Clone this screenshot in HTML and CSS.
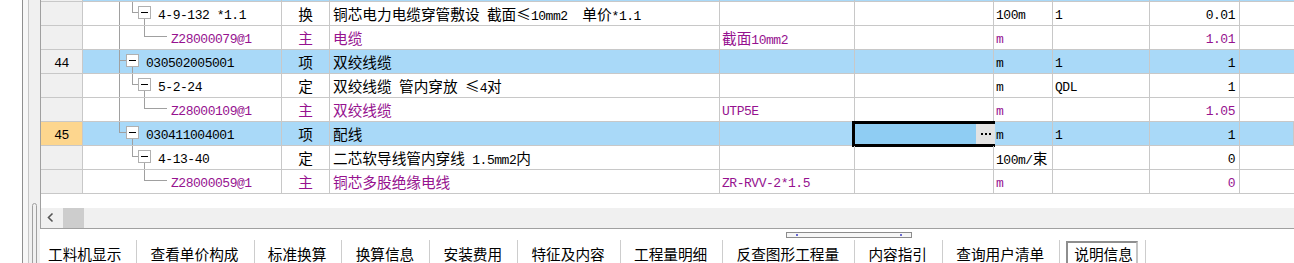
FILE: index.html
```html
<!DOCTYPE html>
<html lang="zh-CN">
<head>
<meta charset="utf-8">
<title>清单</title>
<link rel="stylesheet" href="styles.css">
</head>
<body>
<div class="app">
  <div class="side">
    <div class="side-a"></div>
    <div class="side-b"></div>
    <div class="side-c"><div class="grip"></div></div>
  </div>
  <div class="main">
    <div class="grid">
      <div class="body">
        <div class="rows">
          <div class="row sel">
            <div class="rn a"></div><div class="tree"></div><div class="ty"></div><div class="nm"></div><div class="sp"></div><div class="c6"></div><div class="un"></div><div class="qt"></div><div class="am"></div><div></div>
          </div>
          <div class="row">
            <div class="rn a"></div>
            <div class="tree"><svg class="tw" width="75" height="23" viewBox="0 0 75 23"><path class="ln" d="M36.5 0V23M49.5 0V10.5H55M61.5 16.5V23"/><rect class="bx" x="55.5" y="4.5" width="12" height="12"/><path class="mn" d="M58 10.5H65"/></svg><span class="a">4-9-132 *1.1</span></div>
            <div class="ty">换</div>
            <div class="nm">铜芯电力电缆穿管敷设<span class="a"> </span>截面<span class="fw">≤</span><span class="a">10mm2  </span>单价<span class="a">*1.1</span></div>
            <div class="sp"></div><div class="c6"></div>
            <div class="un a">100m</div><div class="qt a">1</div><div class="am a">0.01</div><div></div>
          </div>
          <div class="row pu">
            <div class="rn a"></div>
            <div class="tree"><svg class="tw" width="88" height="23" viewBox="0 0 88 23"><path class="ln" d="M36.5 0V23M61.5 0V10.5H84"/></svg><span class="a">Z28000079@1</span></div>
            <div class="ty">主</div>
            <div class="nm">电缆</div>
            <div class="sp">截面<span class="a">10mm2</span></div><div class="c6"></div>
            <div class="un a">m</div><div class="qt a"></div><div class="am a">1.01</div><div></div>
          </div>
          <div class="row sel">
            <div class="rn a">44</div>
            <div class="tree"><svg class="tw" width="63" height="23" viewBox="0 0 63 23"><path class="ln" d="M36.5 0V23M36 10.5H43M49.5 16.5V23"/><rect class="bx" x="43.5" y="4.5" width="12" height="12"/><path class="mn" d="M46 10.5H53"/></svg><span class="a">030502005001</span></div>
            <div class="ty">项</div>
            <div class="nm">双绞线缆</div>
            <div class="sp"></div><div class="c6"></div>
            <div class="un a">m</div><div class="qt a">1</div><div class="am a">1</div><div></div>
          </div>
          <div class="row">
            <div class="rn a"></div>
            <div class="tree"><svg class="tw" width="75" height="23" viewBox="0 0 75 23"><path class="ln" d="M36.5 0V23M49.5 0V10.5H55M61.5 16.5V23"/><rect class="bx" x="55.5" y="4.5" width="12" height="12"/><path class="mn" d="M58 10.5H65"/></svg><span class="a">5-2-24</span></div>
            <div class="ty">定</div>
            <div class="nm">双绞线缆<span class="a"> </span>管内穿放<span class="a"> </span><span class="fw">≤</span><span class="a">4</span>对</div>
            <div class="sp"></div><div class="c6"></div>
            <div class="un a">m</div><div class="qt a">QDL</div><div class="am a">1</div><div></div>
          </div>
          <div class="row pu">
            <div class="rn a"></div>
            <div class="tree"><svg class="tw" width="88" height="23" viewBox="0 0 88 23"><path class="ln" d="M36.5 0V23M61.5 0V10.5H84"/></svg><span class="a">Z28000109@1</span></div>
            <div class="ty">主</div>
            <div class="nm">双绞线缆</div>
            <div class="sp a">UTP5E</div><div class="c6"></div>
            <div class="un a">m</div><div class="qt a"></div><div class="am a">1.05</div><div></div>
          </div>
          <div class="row sel">
            <div class="rn cur a">45</div>
            <div class="tree"><svg class="tw" width="63" height="23" viewBox="0 0 63 23"><path class="ln" d="M36.5 0V10.5M36 10.5H43M49.5 16.5V23"/><rect class="bx" x="43.5" y="4.5" width="12" height="12"/><path class="mn" d="M46 10.5H53"/></svg><span class="a">030411004001</span></div>
            <div class="ty">项</div>
            <div class="nm">配线</div>
            <div class="sp"></div><div class="c6"></div>
            <div class="un a">m</div><div class="qt a">1</div><div class="am a">1</div><div></div>
            <div class="edit"><div class="ebtn"><svg width="12" height="4" viewBox="0 0 12 4"><rect x="1" y="1" width="2" height="2"/><rect x="5" y="1" width="2" height="2"/><rect x="9" y="1" width="2" height="2"/></svg></div></div>
          </div>
          <div class="row">
            <div class="rn a"></div>
            <div class="tree"><svg class="tw" width="75" height="23" viewBox="0 0 75 23"><path class="ln" d="M49.5 0V10.5H55M61.5 16.5V23"/><rect class="bx" x="55.5" y="4.5" width="12" height="12"/><path class="mn" d="M58 10.5H65"/></svg><span class="a">4-13-40</span></div>
            <div class="ty">定</div>
            <div class="nm">二芯软导线管内穿线<span class="a"> 1.5mm2</span>内</div>
            <div class="sp"></div><div class="c6"></div>
            <div class="un"><span class="a">100m/</span>束</div><div class="qt a"></div><div class="am a">0</div><div></div>
          </div>
          <div class="row pu">
            <div class="rn a"></div>
            <div class="tree"><svg class="tw" width="88" height="23" viewBox="0 0 88 23"><path class="ln" d="M61.5 0V10.5H84"/></svg><span class="a">Z28000059@1</span></div>
            <div class="ty">主</div>
            <div class="nm">铜芯多股绝缘电线</div>
            <div class="sp a">ZR-RVV-2*1.5</div><div class="c6"></div>
            <div class="un a">m</div><div class="qt a"></div><div class="am a">0</div><div></div>
          </div>
        </div>
      </div>
      <div class="hs">
        <div class="harrow"><svg width="22" height="20" viewBox="0 0 22 20"><path d="M11.5 5.5L7.5 9.5L11.5 13.5" fill="none" stroke="#555" stroke-width="1.6"/></svg></div>
        <div class="hthumb"></div>
      </div>
    </div>
    <div class="tabs">
      <div class="tab">工料机显示</div>
      <div class="tab">查看单价构成</div>
      <div class="tab">标准换算</div>
      <div class="tab">换算信息</div>
      <div class="tab">安装费用</div>
      <div class="tab">特征及内容</div>
      <div class="tab">工程量明细</div>
      <div class="tab">反查图形工程量</div>
      <div class="tab">内容指引</div>
      <div class="tab">查询用户清单</div>
      <div class="tab on"><div class="tbox">说明信息</div></div>
      <div class="handle"><i></i><i></i></div>
    </div>
  </div>
</div>
</body>
</html>
```
FILE: styles.css
```css
* { box-sizing: border-box; margin: 0; padding: 0; }
html, body { width: 1294px; height: 263px; overflow: hidden; background: #fff; }
body {
  font-family: "Noto Sans CJK SC", sans-serif;
  font-size: 14.67px;
  color: #000;
}
.app { display: flex; height: 263px; }

.side { display: flex; flex: none; width: 40px; }
.side-a { width: 23px; background: #fff; border-right: 1px solid #8f8f8f; }
.side-b { width: 6px; background: #f7f7f7; border-right: 1px solid #c6c6c6; }
.side-c { width: 11px; background: #f0f0f0; padding: 203px 0 0 3px; }
.grip { width: 5px; height: 80px; border: 1px solid #a0a0a0; border-radius: 3px 3px 0 0; }

.main { flex: 1; min-width: 0; display: flex; flex-direction: column; }
.grid {
  height: 229px;
  border-left: 1px solid #a0a0a0;
  border-bottom: 1px solid #a0a0a0;
  display: flex;
  flex-direction: column;
}
.body { height: 208px; overflow: hidden; background: #fff; }
.rows { margin-top: -22px; }
.row {
  position: relative;
  display: grid;
  grid-template-columns: 42px 199px 48px 390px 135px 139px 59px 97px 90px 1fr;
  height: 24px;
  line-height: 23px;
  border-bottom: 1px solid #c8c8c8;
}
.row > div { border-right: 1px solid #c8c8c8; white-space: pre; overflow: hidden; }
.row > div:last-child { border-right: 0; }
.sel > div { background: #a9d9f8; }
.row > .rn { background: #f0f0f0; text-align: center; }
.row > .rn.cur { background: #fdd68e; }
.tree { display: flex; }
.tw { display: block; flex: none; shape-rendering: crispEdges; }
.ln { fill: none; stroke: #a0a0a0; stroke-width: 1; }
.bx { fill: #fff; stroke: #b0b0b0; stroke-width: 1; }
.mn { fill: none; stroke: #000; stroke-width: 1; }
.ty { text-align: center; }
.nm { padding-left: 3px; }
.sp { padding-left: 2px; }
.un { padding-left: 2px; }
.qt { padding-left: 2px; }
.am { text-align: right; padding-right: 4px; }
.a {
  font-family: "Liberation Mono", monospace;
  font-size: 13px;
  letter-spacing: -0.47px;
}
.row > .a, .tree > .a { padding-top: 2px; }
.fw { display: inline-block; width: 1em; text-align: center; }
.pu { color: #96128f; }

.row > .edit {
  position: absolute;
  left: 811px;
  top: -1px;
  width: 143px;
  height: 26px;
  padding: 0;
  border: 3px solid #000;
  background: #8fcdf3;
  display: flex;
  justify-content: flex-end;
}
.ebtn {
  width: 19px;
  background: #e3e3e3;
  display: flex;
  align-items: center;
  justify-content: center;
}
.ebtn svg { display: block; fill: #000; }

.hs { height: 20px; background: #f0f0f0; display: flex; }
.harrow { width: 22px; }
.harrow svg { display: block; }
.hthumb { width: 21px; background: #cdcdcd; }

.tabs {
  flex: 1;
  position: relative;
  display: flex;
  padding: 11px 0 0 8px;
  background: #fff;
}
.tab {
  padding: 3px 15px 0 13.25px;
  border-right: 1px solid #cdcdcd;
  font-size: 14.67px;
  line-height: 22px;
  white-space: nowrap;
}
.tab:first-child { padding-left: 0; }
.tab.on { padding: 1px 7px 0 6px; }
.tbox {
  border: 2px solid;
  border-color: #8e8e8e #c4c4c4 #c4c4c4 #8e8e8e;
  padding: 0 3px 0 6px;
  line-height: 22px;
}
.handle {
  position: absolute;
  left: 746px;
  top: 3px;
  width: 126px;
  height: 6px;
  border: 1px solid #8c8c8c;
  background: #f6f6f6;
  display: flex;
  align-items: center;
  justify-content: space-between;
  padding: 0 9px;
}
.handle i { display: block; width: 2px; height: 2px; background: #6a6ad0; }
```
